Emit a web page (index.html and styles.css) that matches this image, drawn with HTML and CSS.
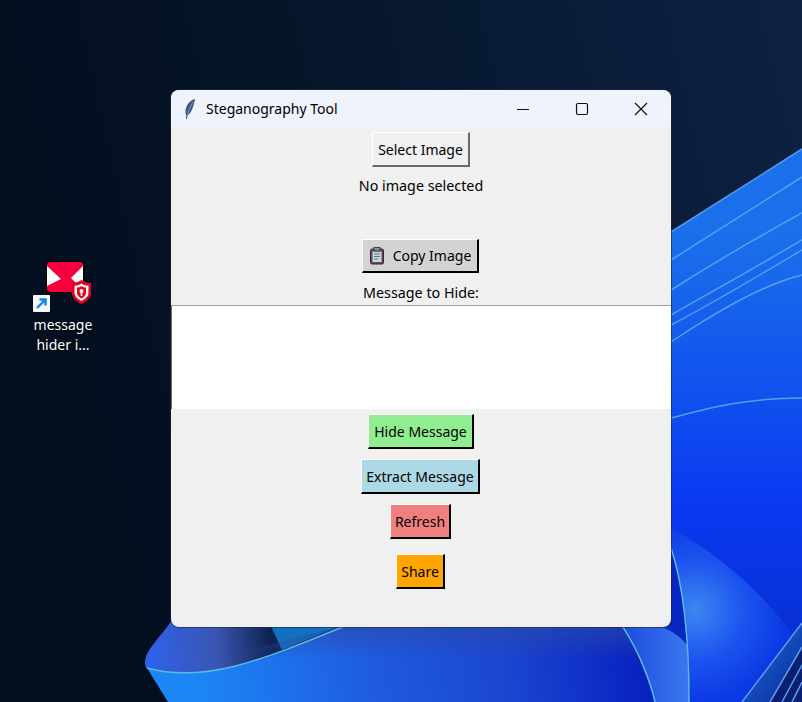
FILE: index.html
```html
<!DOCTYPE html>
<html lang="en">
<head>
    <meta charset="UTF-8">
    <title>Steganography Tool</title>
    <link rel="stylesheet" href="styles.css">
</head>
<body>
    <div class="desktop">
        <!-- wallpaper -->
        <svg class="wallpaper" width="802" height="702" viewBox="0 0 802 702">
            <defs>
                <linearGradient id="sky" x1="0" y1="0.3" x2="1" y2="0.1">
                    <stop offset="0" stop-color="#030e1e"/>
                    <stop offset="0.4" stop-color="#06152a"/>
                    <stop offset="1" stop-color="#0d2142"/>
                </linearGradient>
                <linearGradient id="sheet" x1="0" y1="0" x2="0" y2="1">
                    <stop offset="0.15" stop-color="#1a70ea"/>
                    <stop offset="0.45" stop-color="#1050ee"/>
                    <stop offset="0.65" stop-color="#0a38f2"/>
                    <stop offset="0.9" stop-color="#0730d0"/>
                </linearGradient>
                <linearGradient id="lobe" gradientUnits="userSpaceOnUse" x1="150" y1="650" x2="272" y2="640">
                    <stop offset="0" stop-color="#2f62e8"/>
                    <stop offset="0.55" stop-color="#3a55b0"/>
                    <stop offset="1" stop-color="#0d2250"/>
                </linearGradient>
                <linearGradient id="floor" gradientUnits="userSpaceOnUse" x1="200" y1="702" x2="640" y2="640">
                    <stop offset="0" stop-color="#1c86f5"/>
                    <stop offset="0.4" stop-color="#1f5ae0"/>
                    <stop offset="0.7" stop-color="#1a45d0"/>
                    <stop offset="1" stop-color="#0722c0"/>
                </linearGradient>
                <linearGradient id="floor-shade" x1="0" y1="0" x2="0" y2="1">
                    <stop offset="0" stop-color="#2c4aa8" stop-opacity="0.7"/>
                    <stop offset="1" stop-color="#2c4aa8" stop-opacity="0"/>
                </linearGradient>
                <radialGradient id="fold" gradientUnits="userSpaceOnUse" cx="695" cy="610" r="95">
                    <stop offset="0" stop-color="#3e86f2"/>
                    <stop offset="0.55" stop-color="#1a52ee"/>
                    <stop offset="1" stop-color="#0a38e4"/>
                </radialGradient>
                <linearGradient id="wedge" x1="0" y1="0" x2="1" y2="0">
                    <stop offset="0" stop-color="#1e4ee0"/>
                    <stop offset="1" stop-color="#3a78ee"/>
                </linearGradient>
                <linearGradient id="band" x1="0" y1="0" x2="1" y2="1">
                    <stop offset="0" stop-color="#1e6cec"/>
                    <stop offset="1" stop-color="#0a2a90"/>
                </linearGradient>
            </defs>
            <rect width="802" height="702" fill="url(#sky)"/>
            <path d="M640 252 L802 149 V702 H640 Z" fill="url(#sheet)"/>
            <path d="M671 232 L802 149" class="edge"/>
            <path d="M671 260 L802 177" class="streak"/>
            <path d="M671 290 C715 262 760 236 802 213" class="streak"/>
            <path d="M671 315 C715 290 765 262 802 240" class="streak"/>
            <path d="M671 325 C715 302 765 272 802 250" class="streak"/>
            <path d="M671 342 C710 316 760 285 802 275" class="streak"/>
            <path d="M671 418 C710 408 745 398 802 398" class="streak"/>

            <!-- folds lower right -->
            <path d="M640 540 L671 548 C685 590 689 650 689 702 H640 Z" fill="#0826c0"/>
            <path d="M671 528 C720 555 765 595 793 635 L742 702 H689 C689 650 685 590 671 548 Z" fill="url(#fold)"/>
            <path d="M802 623 L742 702 H770 L802 647 Z" fill="url(#band)"/>
            <path d="M802 647 L770 702 H802 Z" fill="#0a1f70"/>
            <path d="M802 665 L782 702" class="streak"/>
            <path d="M802 682 L792 702" class="streak"/>
            <path d="M802 623 L742 702" class="streak"/>
            <path d="M802 647 L770 702" class="streak"/>

            <!-- folds lower left -->
            <path d="M172 620 C160 638 145 650 145 663 C145 666 146 668 147 669 C205 684 262 660 282 650 L268 620 Z" fill="url(#lobe)"/>
            <path d="M268 620 L282 650 L350 622 Z" fill="#1270c0"/>
            <path d="M147 668 C205 684 262 660 350 624 L625 624 L655 702 H168 Z" fill="url(#floor)"/>
            <path d="M350 624 L625 624 L640 660 H210 Z" fill="url(#floor-shade)"/>
            <path d="M662 627 C672 631 682 638 687 645 L689 702 H655 C650 680 638 650 625 627 Z" fill="url(#wedge)"/>
            <path d="M147 668 C205 684 262 660 350 624" class="rim"/>
            <path d="M623 627 C638 650 650 680 655 702" class="rim"/>
            <path d="M671 548 C685 590 689 650 689 702" class="rim"/>
        </svg>

        <div class="shortcut">
            <svg class="shortcut-icon" width="62" height="54" viewBox="0 0 62 54">
                <rect x="16" y="1" width="39" height="32" rx="4" fill="#000"/>
                <rect x="17" y="2" width="36" height="30" rx="3" fill="#f5003c"/>
                <path d="M17 6 L31 19 L17 26 Z" fill="#fff"/>
                <path d="M53 6 L41 18 L47 24 L53 21 Z" fill="#fff"/>
                <path d="M51.500 20 C54.500 22 57.500 23 61 23 V33 C61 38 56 42 51.500 44 C47 42 42 38 42 33 V23 C45.500 23 48.500 22 51.500 20 Z" fill="#e8001e"/>
                <path d="M51.500 23.500 C53.500 25 56 25.700 58.500 25.700 V33 C58.500 36.500 54.500 39.500 51.500 41 C48.500 39.500 44.500 36.500 44.500 33 V25.700 C47 25.700 49.500 25 51.500 23.500 Z" fill="#fff"/>
                <path d="M51.500 26 C53 27 54.700 27.500 56 27.500 V33 C56 35.500 53.500 37.500 51.500 38.500 C49.500 37.500 47 35.500 47 33 V27.500 C48.300 27.500 50 27 51.500 26 Z" fill="#e8001e"/>
                <circle cx="51.500" cy="31" r="2" fill="#fff"/>
                <rect x="50.700" y="32" width="1.600" height="4" fill="#fff"/>
                <rect x="3" y="35" width="17" height="17" rx="1" fill="#f4f6f8"/>
                <path d="M7 48 L15 40 M9.500 39.500 H15.500 V45.500" fill="none" stroke="#1284e0" stroke-width="2.4"/>
            </svg>
            <div class="shortcut-label">message<br>hider i...</div>
        </div>

        <div class="window">
            <div class="titlebar">
                <svg class="feather" width="12" height="22" viewBox="0 0 12 22">
                    <path d="M11 1 C6 2 2 7 1.500 13 C1.300 15 1.600 16.500 2.300 17.500 L2 21 L3 21 L3.600 17.500 C6.500 16 9.500 10 11 1 Z" fill="#3f5a84"/>
                    <path d="M9 4 C6.500 8 4.500 13 3.300 18" fill="none" stroke="#8ca4c6" stroke-width="0.8"/>
                </svg>
                <span class="title">Steganography Tool</span>
                <div class="caption-buttons">
                    <svg width="14" height="14" viewBox="0 0 14 14"><path d="M1 7.500 H13" class="glyph"/></svg>
                    <svg width="14" height="14" viewBox="0 0 14 14"><rect x="1.500" y="1.500" width="11" height="11" rx="1.500" class="glyph"/></svg>
                    <svg width="14" height="14" viewBox="0 0 14 14"><path d="M1 1 L13 13 M13 1 L1 13" class="glyph"/></svg>
                </div>
            </div>
            <div class="content">
                <button class="btn btn-select">Select Image</button>
                <p class="label label-status">No image selected</p>
                <button class="btn btn-copy">
                    <svg width="16" height="18" viewBox="0 0 16 18">
                        <rect x="1.500" y="2" width="13" height="15" rx="1.500" fill="#6a4a5a" stroke="#2c2a3a"/>
                        <rect x="3.500" y="4.500" width="9" height="10.500" fill="#c9d8d4"/>
                        <rect x="5" y="0.500" width="6" height="3.500" fill="#7f8fb0" stroke="#2c2a3a" stroke-width="0.8"/>
                        <path d="M5 7 H11 M5 9.500 H11 M5 12 H9" stroke="#5d7a88"/>
                    </svg>
                    Copy Image
                </button>
                <p class="label label-message">Message to Hide:</p>
                <textarea class="message"></textarea>
                <button class="btn btn-hide">Hide Message</button>
                <button class="btn btn-extract">Extract Message</button>
                <button class="btn btn-refresh">Refresh</button>
                <button class="btn btn-share">Share</button>
            </div>
        </div>
    </div>
</body>
</html>
```

FILE: styles.css
```css
html, body {
    margin: 0;
    padding: 0;
    overflow: hidden;
}

body {
    font-family: "Noto Sans", "Open Sans", sans-serif;
    color: #000;
}

.desktop {
    position: relative;
    width: 802px;
    height: 702px;
    overflow: hidden;
}

.wallpaper {
    position: absolute;
    left: 0;
    top: 0;
}

.edge {
    fill: none;
    stroke: #4f9bf0;
    stroke-width: 1.5;
}

.streak {
    fill: none;
    stroke: #5a9cf4;
    stroke-width: 1.5;
}

.rim {
    fill: none;
    stroke: #5cb8e8;
    stroke-width: 1.5;
}

.shortcut {
    position: absolute;
    left: 23px;
    top: 260px;
    width: 80px;
    text-align: center;
}

.shortcut-icon {
    display: block;
    margin-left: 7px;
}

.shortcut-label {
    color: #fff;
    font-size: 14px;
    line-height: 20px;
    margin-top: 1px;
    text-shadow: 0 1px 2px rgba(0, 0, 0, 0.8);
}

.window {
    position: absolute;
    left: 171px;
    top: 90px;
    width: 500px;
    height: 537px;
    background-color: #f0f0f0;
    border-radius: 8px;
    overflow: hidden;
    box-shadow: 0 0 0 1px rgba(30, 40, 60, 0.6);
}

.titlebar {
    display: flex;
    align-items: center;
    height: 37px;
    background-color: #eff3fb;
    padding-left: 13px;
}

.feather {
    margin-right: 10px;
}

.title {
    font-size: 14px;
}

.caption-buttons {
    display: flex;
    gap: 45px;
    margin-left: auto;
    margin-right: 23px;
}

.glyph {
    fill: none;
    stroke: #111;
    stroke-width: 1.2;
}

.content {
    display: flex;
    flex-direction: column;
    align-items: center;
}

.label {
    margin: 0;
    font-size: 14.3px;
    line-height: 24px;
}

.label-status {
    margin-top: 7px;
    margin-bottom: 41px;
}

.label-message {
    margin-top: 8px;
}

.btn {
    display: flex;
    align-items: center;
    justify-content: center;
    gap: 8px;
    height: 35px;
    padding: 0;
    font-family: inherit;
    font-size: 14px;
    color: #000;
    white-space: nowrap;
    box-sizing: border-box;
    border-style: solid;
    border-width: 1px 2px 2px 1px;
    border-color: #fff #000 #000 #fff;
}

.btn-select {
    width: 98px;
    margin-top: 5px;
    background-color: #f0f0f0;
    border-color: #fff #696969 #696969 #fff;
}

.btn-copy {
    width: 117px;
    height: 34px;
    margin-right: 1px;
    background-color: #d3d3d3;
}

.message {
    display: block;
    width: 500px;
    height: 104px;
    margin: 0 0 5px;
    padding: 0;
    box-sizing: border-box;
    background-color: #fff;
    border: none;
    border-top: 1px solid #a0a0a0;
    border-left: 1px solid #696969;
    resize: none;
    outline: none;
}

.btn-hide {
    width: 106px;
    margin-bottom: 10px;
    background-color: #90ee90;
}

.btn-extract {
    width: 119px;
    margin-right: 1px;
    margin-bottom: 10px;
    background-color: #add8e6;
}

.btn-refresh {
    width: 61px;
    margin-right: 1px;
    margin-bottom: 15px;
    background-color: #f08080;
}

.btn-share {
    width: 49px;
    margin-right: 1px;
    background-color: #ffa500;
}
```
